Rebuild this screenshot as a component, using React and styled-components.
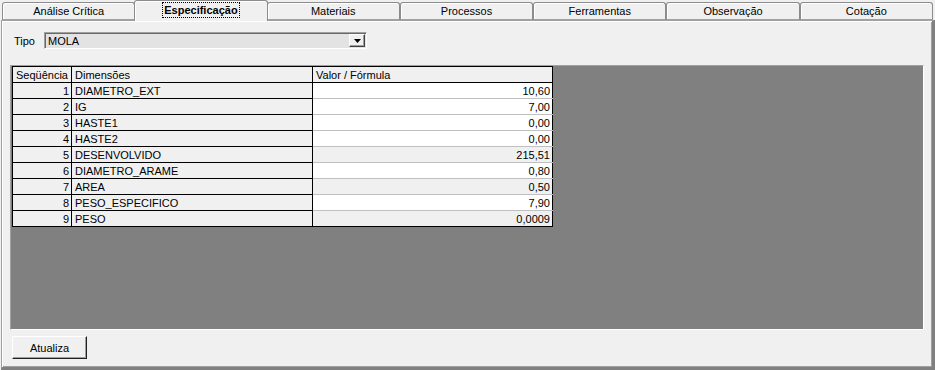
import React from 'react';
import styled, { createGlobalStyle } from 'styled-components';

const GlobalStyle = createGlobalStyle`
  html, body {
    margin: 0;
    padding: 0;
    background: #f0f0f0;
  }
  body {
    font-family: "Liberation Sans", Arial, sans-serif;
    font-size: 11px;
    color: #000;
    -webkit-font-smoothing: none;
  }
`;

const Window = styled.div`
  width: 935px;
  height: 370px;
  display: flex;
  flex-direction: column;
  background: #f0f0f0;
  box-sizing: border-box;
`;

const TabStrip = styled.div`
  display: flex;
  align-items: flex-end;
  height: 20px;
  padding: 0 2px 0 2px;
`;

const Tab = styled.div`
  position: relative;
  flex: 1;
  box-sizing: border-box;
  height: ${p => (p.$active ? '21px' : '18px')};
  margin: ${p => (p.$active ? '0 -1px -1px' : '0')};
  z-index: ${p => (p.$active ? 1 : 0)};
  display: flex;
  align-items: center;
  justify-content: center;
  background: #f0f0f0;
  border: 1px solid #8c8c8c;
  border-bottom: ${p => (p.$active ? 'none' : '1px solid #a0a0a0')};
  border-radius: 3px 3px 0 0;
  box-shadow: inset 1px 1px 0 #ffffff;
  font-weight: ${p => (p.$active ? 'bold' : 'normal')};
  padding-bottom: ${p => (p.$active ? '2px' : '0')};
`;

const FocusLabel = styled.span`
  outline: 1px dotted #000;
  outline-offset: 0;
  padding: 0 1px;
  line-height: 14px;
`;

const Panel = styled.div`
  flex: 1;
  display: flex;
  flex-direction: column;
  margin-left: 1px;
  border-top: 1px solid #a0a0a0;
  border-left: 1px solid #a0a0a0;
  border-right: 3px solid #808080;
  border-bottom: 3px solid #808080;
  box-shadow: inset 1px 1px 0 #ffffff, inset -1px -1px 0 #a0a0a0;
  padding: 11px 8px 8px 8px;
`;

const TypeRow = styled.div`
  display: flex;
  align-items: center;
  height: 17px;
  gap: 10px;
  padding-left: 4px;
`;

const Label = styled.span`
  width: 20px;
`;

const Combo = styled.div`
  width: 323px;
  height: 17px;
  box-sizing: border-box;
  display: flex;
  align-items: center;
  justify-content: space-between;
  background: #e3e3e3;
  border-top: 1px solid #a0a0a0;
  border-left: 1px solid #a0a0a0;
  border-right: 1px solid #ffffff;
  border-bottom: 1px solid #ffffff;
  box-shadow: inset 1px 1px 0 #696969;
  padding: 1px 1px 1px 3px;
`;

const ComboButton = styled.div`
  width: 16px;
  height: 13px;
  box-sizing: border-box;
  background: #f0f0f0;
  border-top: 1px solid #ffffff;
  border-left: 1px solid #ffffff;
  border-right: 1px solid #404040;
  border-bottom: 1px solid #404040;
  box-shadow: inset -1px -1px 0 #a0a0a0;
  display: flex;
  align-items: center;
  justify-content: center;
`;

const GridArea = styled.div`
  flex: 1;
  margin-top: 16px;
  background: #808080;
  border-top: 1px solid #a0a0a0;
  border-left: 1px solid #a0a0a0;
  border-right: 1px solid #ffffff;
  border-bottom: 1px solid #ffffff;
  padding: 0 0 0 1px;
`;

const Grid = styled.table`
  border-collapse: collapse;
  table-layout: fixed;
  font-size: 11px;
`;

const Cell = styled.td`
  box-sizing: border-box;
  height: 16px;
  padding: 0 2px 0 3px;
  line-height: 14px;
  font-weight: normal;
  white-space: nowrap;
  overflow: hidden;
  text-align: ${p => (p.$right ? 'right' : 'left')};
  background: ${p => (p.$white ? '#ffffff' : '#f0f0f0')};
  border: 1px solid #000;
  border-top-color: ${p => (p.$soft ? '#c0c0c0' : '#000')};
  border-bottom-color: ${p => (p.$soft && !p.$last ? '#c0c0c0' : '#000')};
`;

const ButtonRow = styled.div`
  display: flex;
  margin-top: 6px;
  padding-left: 2px;
`;

const Button = styled.button`
  width: 75px;
  height: 23px;
  box-sizing: border-box;
  background: #f0f0f0;
  font-family: "Liberation Sans", Arial, sans-serif;
  font-size: 11px;
  color: #000;
  border-top: 1px solid #ffffff;
  border-left: 1px solid #ffffff;
  border-right: 1px solid #202020;
  border-bottom: 1px solid #202020;
  box-shadow: inset -1px -1px 0 #a0a0a0;
  padding: 0;
`;

const tabs = ['Análise Crítica', 'Especificação', 'Materiais', 'Processos', 'Ferramentas', 'Observação', 'Cotação'];

const rows = [
  { n: 1, name: 'DIAMETRO_EXT', value: '10,60', editable: true },
  { n: 2, name: 'IG', value: '7,00', editable: true },
  { n: 3, name: 'HASTE1', value: '0,00', editable: true },
  { n: 4, name: 'HASTE2', value: '0,00', editable: true },
  { n: 5, name: 'DESENVOLVIDO', value: '215,51', editable: false },
  { n: 6, name: 'DIAMETRO_ARAME', value: '0,80', editable: true },
  { n: 7, name: 'AREA', value: '0,50', editable: false },
  { n: 8, name: 'PESO_ESPECIFICO', value: '7,90', editable: true },
  { n: 9, name: 'PESO', value: '0,0009', editable: false },
];

export default function App() {
  return (
    <>
      <GlobalStyle />
      <Window>
        <TabStrip>
          {tabs.map(t => (
            <Tab key={t} $active={t === 'Especificação'}>
              {t === 'Especificação' ? <FocusLabel>{t}</FocusLabel> : t}
            </Tab>
          ))}
        </TabStrip>
        <Panel>
          <TypeRow>
            <Label>Tipo</Label>
            <Combo>
              <span>MOLA</span>
              <ComboButton>
                <svg width="7" height="4" viewBox="0 0 7 4">
                  <path d="M0 0h7L3.5 4z" fill="#000" />
                </svg>
              </ComboButton>
            </Combo>
          </TypeRow>
          <GridArea>
            <Grid>
              <colgroup>
                <col style={{ width: 59 }} />
                <col style={{ width: 241 }} />
                <col style={{ width: 240 }} />
              </colgroup>
              <thead>
                <tr>
                  <Cell as="th">Seqüência</Cell>
                  <Cell as="th">Dimensões</Cell>
                  <Cell as="th">Valor / Fórmula</Cell>
                </tr>
              </thead>
              <tbody>
                {rows.map((r, i) => (
                  <tr key={r.n}>
                    <Cell $right>{r.n}</Cell>
                    <Cell>{r.name}</Cell>
                    <Cell $right $soft $white={r.editable} $last={i === rows.length - 1}>
                      {r.value}
                    </Cell>
                  </tr>
                ))}
              </tbody>
            </Grid>
          </GridArea>
          <ButtonRow>
            <Button>Atualiza</Button>
          </ButtonRow>
        </Panel>
      </Window>
    </>
  );
}
